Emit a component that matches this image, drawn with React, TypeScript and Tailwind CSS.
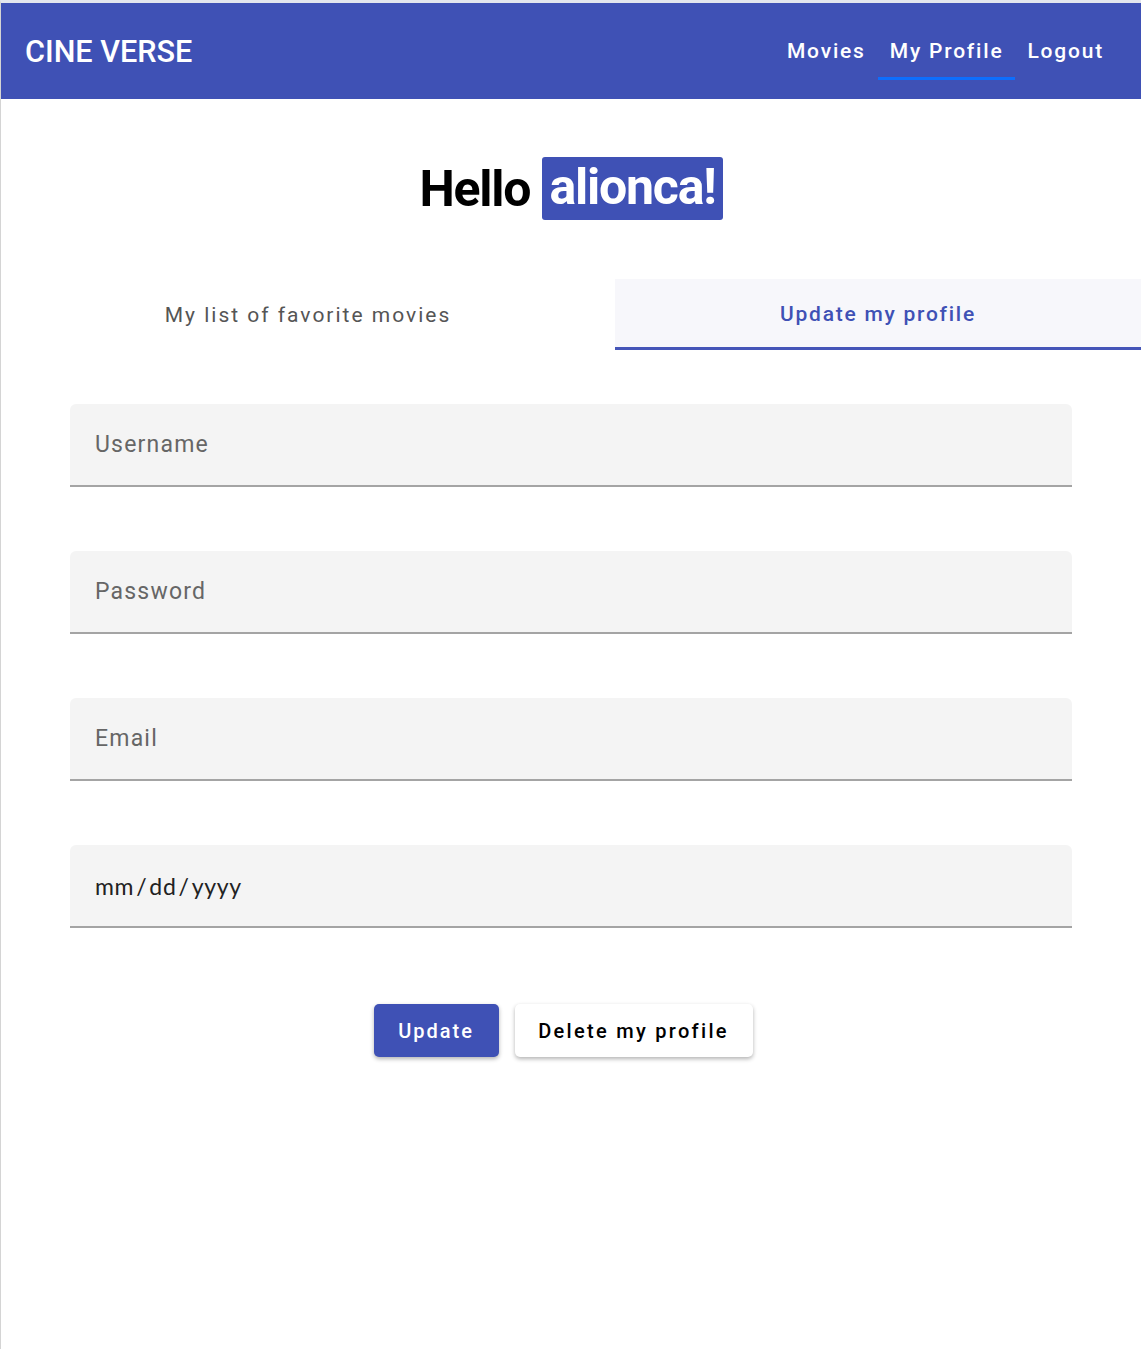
import { useState } from 'react';

const fields = ['Username', 'Password', 'Email'];

export default function App() {
  const [tab] = useState(1);

  return (
    <div className="min-h-[1349px] bg-white border-l border-[#d4d4d4] border-t-[3px] border-t-[#e3e6ee] font-['Roboto',sans-serif]">
      {/* Navbar */}
      <nav className="h-[96px] bg-[#3f51b5] flex items-center justify-between pl-6 pr-[25px]">
        <a className="text-white text-[30.6px] font-medium leading-none pt-[3px]">CINE VERSE</a>
        <div className="flex items-center h-full pt-[2px]">
          <a className="text-white text-[21px] font-medium tracking-[1.8px] px-3 py-3">Movies</a>
          <a className="relative text-white text-[21px] font-medium tracking-[1.8px] px-3 py-3">
            My Profile
            <span className="absolute left-0 right-0 bottom-0 h-[3px] bg-[#0d6efd]" />
          </a>
          <a className="text-white text-[21px] font-medium tracking-[1.8px] px-3 py-3">Logout</a>
        </div>
      </nav>

      {/* Greeting */}
      <div className="flex justify-center items-center mt-[58px] gap-3">
        <h1 className="text-[50px] font-bold text-black tracking-[-1.2px] leading-none">Hello</h1>
        <span className="bg-[#3f51b5] text-white text-[50px] font-bold tracking-[-1.2px] leading-none rounded-[3px] px-[7px] pt-[5px] pb-[8px]">
          alionca!
        </span>
      </div>

      {/* Tabs */}
      <div className="flex mt-[59px]">
        <div
          className={`w-[614px] h-[71px] flex items-center justify-center text-[21px] tracking-[2px] font-normal pt-[3px] ${
            tab === 0 ? 'text-[#3f51b5] bg-[#f7f7fb] border-b-[3px] border-[#4555b8]' : 'text-[#555]'
          }`}
        >
          My list of favorite movies
        </div>
        <div
          className={`flex-1 h-[71px] flex items-center justify-center text-[21px] tracking-[1.75px] font-medium pt-[3px] ${
            tab === 1 ? 'text-[#3f51b5] bg-[#f7f7fb] border-b-[3px] border-[#4555b8]' : 'text-[#555]'
          }`}
        >
          Update my profile
        </div>
      </div>

      {/* Form */}
      <form className="flex flex-col gap-[64px] px-[69px] mt-[54px]">
        {fields.map((f) => (
          <div
            key={f}
            className="h-[83px] bg-[#f4f4f4] rounded-t-[6px] border-b-2 border-[#a4a4a4] flex items-center pl-[25px] pt-[1px]"
          >
            <span className="text-[23px] text-[#666] tracking-[1.2px]">{f}</span>
          </div>
        ))}
        <div className="h-[83px] bg-[#f4f4f4] rounded-t-[6px] border-b-2 border-[#a4a4a4] flex items-center pl-[25px] pt-[1px]">
          <span className="text-[23px] text-[#222] font-['Lato',sans-serif] tracking-[0.7px]">
            mm<span className="mx-[2px]">/</span>dd<span className="mx-[2px]">/</span>yyyy
          </span>
        </div>

        <div className="flex justify-center mt-[12px]">
          <button
            type="button"
            className="w-[125px] h-[53px] mr-4 bg-[#3f51b5] text-white text-[20px] font-medium tracking-[2px] rounded-[5px] shadow-[0_2px_4px_rgba(0,0,0,0.3)]"
          >
            Update
          </button>
          <button
            type="button"
            className="w-[238px] h-[53px] mr-4 bg-white text-black text-[20px] font-medium tracking-[2.3px] rounded-[5px] shadow-[0_2px_4px_rgba(0,0,0,0.3)]"
          >
            Delete my profile
          </button>
        </div>
      </form>
    </div>
  );
}
